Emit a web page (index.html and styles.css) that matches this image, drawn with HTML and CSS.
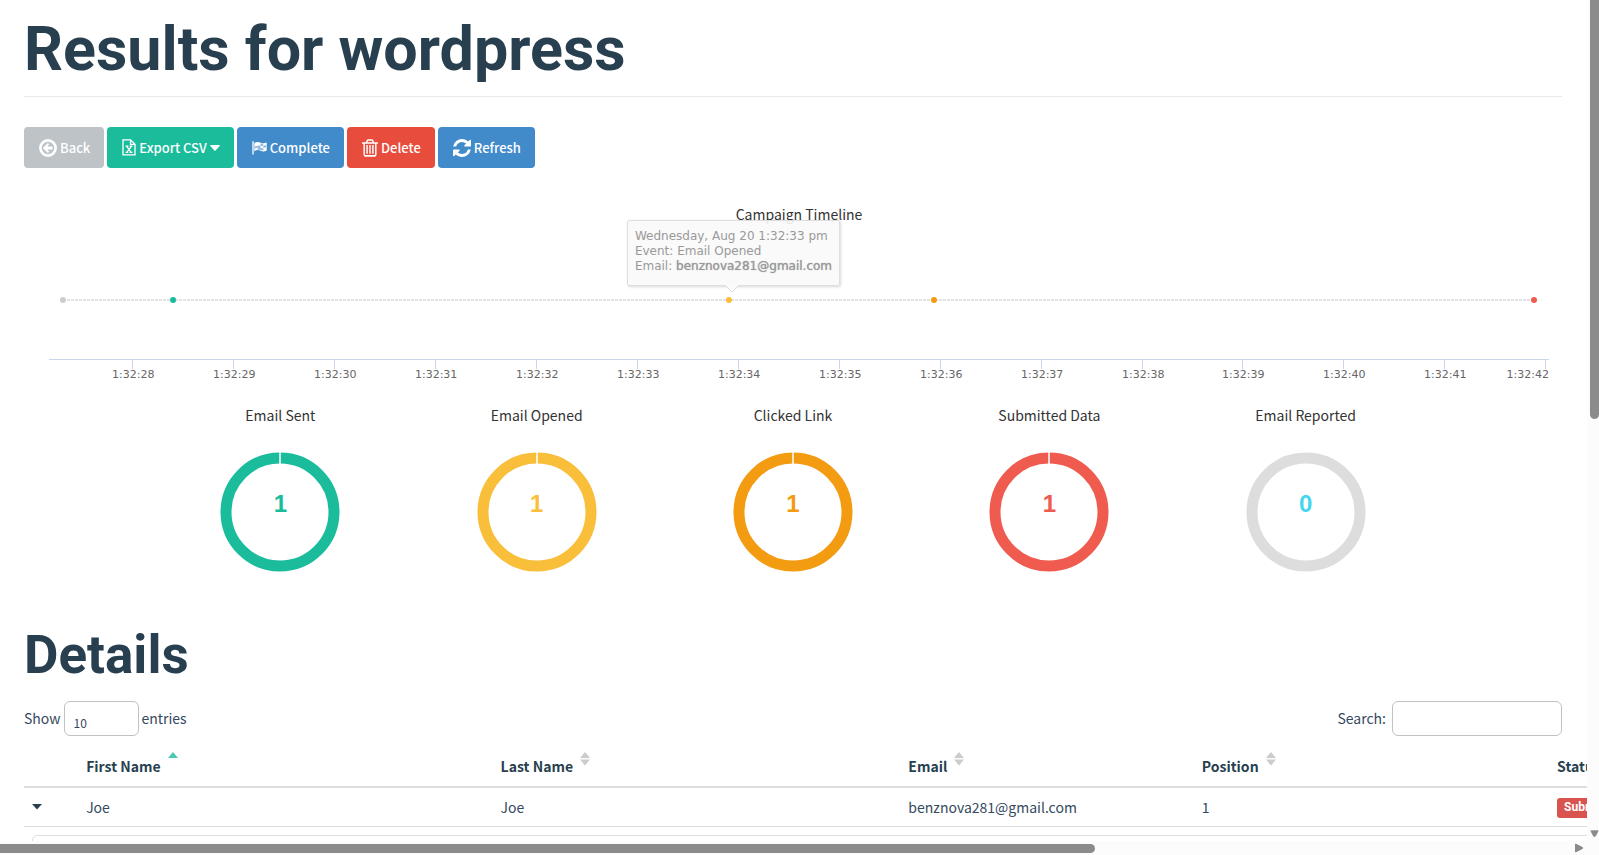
FILE: index.html
```html
<!DOCTYPE html>
<html lang="en">
<head>
<meta charset="utf-8">
<title>Results for wordpress</title>
<link rel="stylesheet" href="styles.css">
</head>
<body>
<div class="window">
<main class="page">
  <h1 class="page-title">Results for wordpress</h1>

  <div class="toolbar">
    <button class="btn btn-muted" type="button"><svg class="icon icon-18" viewBox="0 0 18 18" aria-hidden="true"><circle cx="9" cy="9" r="7.6" fill="none" stroke="currentColor" stroke-width="2.7"/><path d="M8.900 3.900 10.200 5.200 8.300 7.500H13.500V10.500H8.300L10.200 12.800 8.900 14.100 3.800 9Z" fill="currentColor"/></svg>Back</button>
    <button class="btn btn-green" type="button"><svg class="icon icon-file" viewBox="0 0 14 17" aria-hidden="true"><path d="M1 .9H8.6L13 5.3V15.9H1ZM8.5 1V5.4H13" fill="none" stroke="currentColor" stroke-width="1.3"/><path d="M3.6 7.2H6.4M7.7 7.2H10.4M3.6 13.4H6.3M7.6 13.4H10.4M4.7 7.3 9.2 13.3M9.4 7.3 4.7 13.3" fill="none" stroke="currentColor" stroke-width="1.3"/></svg>Export CSV<svg class="caret" viewBox="0 0 10 6" aria-hidden="true"><path d="M.6 0H9.4Q10.3.2 9.6 1L5.6 5.5Q5 6 4.4 5.5L.4 1Q-.3.2.6 0Z" fill="currentColor"/></svg></button>
    <button class="btn btn-blue" type="button"><svg class="icon icon-flag" viewBox="0 0 15 14" aria-hidden="true"><path d="M1 .3V13.6" stroke="currentColor" stroke-width="1.3"/><path d="M2.3 2.1Q5.3.2 8.1 1.6T14.7 1.5V9.4Q11.4 11.3 8.6 9.7T2.3 10.2Z" fill="currentColor"/><path d="M5.4 2.2V4.7L2.8 5.5V7.6L5.4 6.6ZM5.5 6.7 8.4 7V9L5.5 8.6ZM8.5 2.6 11.2 2.8V5L8.5 4.7ZM8.5 4.8V7L5.5 6.5V4.5ZM11.3 5 14 4V6.3L11.3 7.1ZM11.3 7.2V9.4L8.5 9V7.1Z" fill="#428bca" fill-opacity=".6"/></svg>Complete</button>
    <button class="btn btn-red" type="button"><svg class="icon icon-trash" viewBox="192 128 1408 1536" aria-hidden="true"><path fill="currentColor" fill-rule="evenodd" d="M672 384h448l-48-117q-7-9-17-11h-317q-10 2-17 11zM448 512v948q0 44 28 60h840q28-16 28-60v-948zM1600 416v64q0 14-9 23t-23 9h-96v948q0 83-47 143.500t-113 60.500h-832q-66 0-113-58.500t-47-141.500v-952h-96q-14 0-23-9t-9-23v-64q0-14 9-23t23-9h309l70-167q15-37 54-63t79-26h320q40 0 79 26t54 63l70 167h309q14 0 23 9t9 23z"/><path fill="currentColor" d="M576 640h128v768h-128zM832 640h128v768h-128zM1088 640h128v768h-128z"/></svg>Delete</button>
    <button class="btn btn-blue" type="button"><svg class="icon icon-18" viewBox="128 128 1536 1536" aria-hidden="true"><path fill="currentColor" d="M1639 1056q0 5-1 7-64 268-268 434.500t-478 166.500q-146 0-282.500-55t-243.500-157l-129 129q-19 19-45 19t-45-19-19-45v-448q0-26 19-45t45-19h448q26 0 45 19t19 45-19 45l-137 137q71 66 161 102t187 36q134 0 250-65t186-179q11-17 53-117 8-23 30-23h192q13 0 22.500 9.500t9.500 22.500zm25-800v448q0 26-19 45t-45 19h-448q-26 0-45-19t-19-45 19-45l138-138q-148-137-349-137-134 0-250 65t-186 179q-11 17-53 117-8 23-30 23h-199q-13 0-22.500-9.500t-9.500-22.500v-7q65-268 270-434.500t480-166.500q146 0 284 55.500t245 156.500l130-129q19-19 45-19t45 19 19 45z"/></svg>Refresh</button>
  </div>

  <section class="timeline">
    <h2 class="chart-title">Campaign Timeline</h2>
    <svg class="timeline-plot" role="img" aria-label="Campaign events over time">
      <line class="series" x1="0.93%" x2="99%" y1="75" y2="75"/>
      <circle cx="0.93%" cy="75" r="3" fill="#ccc"/>
      <circle cx="8.27%" cy="75" r="3" fill="#1abc9c"/>
      <circle cx="45.330%" cy="75" r="3" fill="#f9bf3b"/>
      <circle cx="59%" cy="75" r="3" fill="#f39c12"/>
      <circle cx="99%" cy="75" r="3" fill="#f05b4f"/>
      <line class="axis" x1="0" x2="100%" y1="134.500" y2="134.500"/>
      <g class="axis">
        <line x1="5.567%" x2="5.567%" y1="134" y2="144"/><line x1="12.300%" x2="12.300%" y1="134" y2="144"/><line x1="19.033%" x2="19.033%" y1="134" y2="144"/><line x1="25.767%" x2="25.767%" y1="134" y2="144"/><line x1="32.500%" x2="32.500%" y1="134" y2="144"/><line x1="39.233%" x2="39.233%" y1="134" y2="144"/><line x1="45.967%" x2="45.967%" y1="134" y2="144"/><line x1="52.700%" x2="52.700%" y1="134" y2="144"/><line x1="59.433%" x2="59.433%" y1="134" y2="144"/><line x1="66.167%" x2="66.167%" y1="134" y2="144"/><line x1="72.900%" x2="72.900%" y1="134" y2="144"/><line x1="79.567%" x2="79.567%" y1="134" y2="144"/><line x1="86.300%" x2="86.300%" y1="134" y2="144"/><line x1="93.033%" x2="93.033%" y1="134" y2="144"/><line x1="99.767%" x2="99.767%" y1="134" y2="144"/>
      </g>
      <g class="ticks">
        <text x="5.620%" y="153">1:32:28</text><text x="12.350%" y="153">1:32:29</text><text x="19.080%" y="153">1:32:30</text><text x="25.810%" y="153">1:32:31</text><text x="32.550%" y="153">1:32:32</text><text x="39.280%" y="153">1:32:33</text><text x="46.010%" y="153">1:32:34</text><text x="52.750%" y="153">1:32:35</text><text x="59.480%" y="153">1:32:36</text><text x="66.210%" y="153">1:32:37</text><text x="72.950%" y="153">1:32:38</text><text x="79.620%" y="153">1:32:39</text><text x="86.350%" y="153">1:32:40</text><text x="93.080%" y="153">1:32:41</text><text class="tick-last" x="100%" y="153">1:32:42</text>
      </g>
    </svg>
    <div class="tooltip">
      <div>Wednesday, Aug 20 1:32:33 pm</div>
      <div>Event: Email Opened</div>
      <div>Email: <b class="tooltip-value">benznova281@gmail.com</b></div>
      <svg class="tooltip-tip" viewBox="0 0 14 8" aria-hidden="true"><path d="M0 0 7 7 14 0" fill="#fbfbfb" stroke="#dedede"/></svg>
    </div>
  </section>

  <section class="stats">
    <div class="stat stat-sent"><h3 class="chart-title">Email Sent</h3><div class="donut"><svg class="ring" viewBox="0 0 120 120" aria-hidden="true"><circle cx="60" cy="60" r="54" fill="none" stroke="currentColor" stroke-width="11"/><path d="M60 0V12" stroke="#fff" stroke-width="1.500"/></svg><span class="count">1</span></div></div>
    <div class="stat stat-opened"><h3 class="chart-title">Email Opened</h3><div class="donut"><svg class="ring" viewBox="0 0 120 120" aria-hidden="true"><circle cx="60" cy="60" r="54" fill="none" stroke="currentColor" stroke-width="11"/><path d="M60 0V12" stroke="#fff" stroke-width="1.500"/></svg><span class="count">1</span></div></div>
    <div class="stat stat-clicked"><h3 class="chart-title">Clicked Link</h3><div class="donut"><svg class="ring" viewBox="0 0 120 120" aria-hidden="true"><circle cx="60" cy="60" r="54" fill="none" stroke="currentColor" stroke-width="11"/><path d="M60 0V12" stroke="#fff" stroke-width="1.500"/></svg><span class="count">1</span></div></div>
    <div class="stat stat-data"><h3 class="chart-title">Submitted Data</h3><div class="donut"><svg class="ring" viewBox="0 0 120 120" aria-hidden="true"><circle cx="60" cy="60" r="54" fill="none" stroke="currentColor" stroke-width="11"/><path d="M60 0V12" stroke="#fff" stroke-width="1.500"/></svg><span class="count">1</span></div></div>
    <div class="stat stat-reported"><h3 class="chart-title">Email Reported</h3><div class="donut"><svg class="ring" viewBox="0 0 120 120" aria-hidden="true"><circle cx="60" cy="60" r="54" fill="none" stroke="#ddd" stroke-width="11"/></svg><span class="count">0</span></div></div>
  </section>

  <h2 class="section-title">Details</h2>
  <div class="controls">
    <label class="control">Show <select class="field length"><option>10</option><option>25</option><option>50</option></select> entries</label>
    <label class="control control-search">Search: <input class="field search" type="search"></label>
  </div>

  <table class="results">
    <colgroup><col class="c-toggle"><col class="c-first"><col class="c-last"><col class="c-email"><col class="c-pos"><col></colgroup>
    <thead>
      <tr><th></th>
        <th>First Name<svg class="sort sort-on" viewBox="0 0 10 14" aria-hidden="true"><path d="M0 6 5 0 10 6Z" fill="currentColor"/></svg></th>
        <th>Last Name<svg class="sort" viewBox="0 0 10 14" aria-hidden="true"><path d="M0 6 5 0 10 6ZM0 7.500H10L5 13.500Z" fill="currentColor"/></svg></th>
        <th>Email<svg class="sort" viewBox="0 0 10 14" aria-hidden="true"><path d="M0 6 5 0 10 6ZM0 7.500H10L5 13.500Z" fill="currentColor"/></svg></th>
        <th>Position<svg class="sort" viewBox="0 0 10 14" aria-hidden="true"><path d="M0 6 5 0 10 6ZM0 7.500H10L5 13.500Z" fill="currentColor"/></svg></th>
        <th>Status</th></tr>
    </thead>
    <tbody>
      <tr><td><button class="toggle" type="button" aria-label="Toggle details"><svg class="caret-row" viewBox="0 0 10 6" aria-hidden="true"><path d="M0 0H10L5 5.500Z" fill="currentColor"/></svg></button></td>
        <td>Joe</td><td>Joe</td><td>benznova281@gmail.com</td><td>1</td><td><span class="label">Submitted Data</span></td></tr>
      <tr class="detail-row"><td colspan="6"><div class="detail"></div></td></tr>
    </tbody>
  </table>
</main>
<div class="vbar"><div class="vthumb"></div><svg class="vend" viewBox="0 0 10 7" aria-hidden="true"><path d="M1 .5H9L6 6.500H4Z" fill="#8b8b8b" stroke="#8b8b8b" stroke-linejoin="round"/></svg></div>
<div class="hbar"><div class="hthumb"></div><svg class="hend" viewBox="0 0 8 10" aria-hidden="true"><path d="M.5 1V9L7.500 5.500V4.500Z" fill="#8b8b8b" stroke="#8b8b8b" stroke-linejoin="round"/></svg></div>
</div>
</body>
</html>
```
FILE: styles.css
```css
* { box-sizing: border-box; }
body {
  margin: 0;
  background: #fff;
  color: #34495e;
  font: 14px/21px "Noto Sans CJK SC", sans-serif;
}
.window {
  height: 100vh;
  display: grid;
  grid-template: minmax(0, 1fr) 14px / minmax(0, 1fr) 12px;
}
.page { overflow: hidden; padding: 0 25px 0 24px; }
.page-title, .section-title {
  margin: 0;
  color: #283f50;
  font-family: Roboto, sans-serif;
  font-weight: 700;
}
.page-title {
  font-size: 61px;
  line-height: 67px;
  padding: 16px 0 13px;
  border-bottom: 1px solid #e7e9ec;
}
.section-title { font-size: 53px; line-height: 58px; margin-top: 54px; }

.toolbar { display: flex; gap: 3px; margin-top: 30px; }
.btn {
  display: flex;
  align-items: center;
  gap: 3px;
  height: 41px;
  padding: 0 14px 0 15px;
  border: 0;
  border-radius: 4px;
  color: #fff;
  font: 500 13px/20px "Noto Sans CJK SC", sans-serif;
}
.btn-muted { background: #bdc3c7; }
.btn-green { background: #1abc9c; }
.btn-blue { background: #428bca; }
.btn-red { background: #e74c3c; }
.icon { flex: none; }
.icon-18 { width: 18px; height: 18px; }
.icon-file { width: 14px; height: 17px; }
.icon-flag { width: 15px; height: 14px; }
.icon-trash { width: 16px; height: 18px; }
.caret { width: 10px; height: 6px; }

.timeline { position: relative; margin-top: 35px; padding: 0 13px 0 25px; }
.chart-title {
  margin: 0;
  color: #333;
  font-size: 14px;
  line-height: 22px;
  font-weight: 400;
  text-align: center;
}
.timeline-plot { display: block; width: 100%; height: 179px; overflow: visible; }
.series { stroke: #e2e2e2; stroke-width: 2; stroke-dasharray: 3 1; }
.axis { stroke: #ccd6eb; stroke-width: 1; }
.ticks { fill: #666; font: 11px "DejaVu Sans", sans-serif; text-anchor: middle; }
.ticks .tick-last { text-anchor: end; }
.tooltip {
  position: absolute;
  top: 17px;
  left: 39.200%;
  padding: 8px 7px 11px;
  border: 1px solid #dedede;
  border-radius: 2px;
  background: rgba(250, 250, 250, .9);
  box-shadow: 1px 1px 3px rgba(0, 0, 0, .15);
  color: #999;
  font: 12px/15px "DejaVu Sans", sans-serif;
  white-space: nowrap;
}
.tooltip-value { font-weight: 400; text-shadow: 0 0 1px currentColor; }
.tooltip-tip { position: absolute; top: 100%; left: 50%; width: 14px; height: 8px; margin-left: -8px; }

.stats { display: grid; grid-template-columns: repeat(5, 1fr); padding: 0 8.333%; }
.donut { display: grid; place-items: center; margin-top: 26px; }
.ring, .count { grid-area: 1 / 1; }
.ring { width: 120px; height: 120px; }
.count { padding-bottom: 16px; font: 700 24px/24px "Liberation Sans", sans-serif; }
.stat-sent { color: #1abc9c; }
.stat-opened { color: #f9bf3b; }
.stat-clicked { color: #f39c12; }
.stat-data { color: #f05b4f; }
.stat-reported { color: #45d6ef; }

.controls { display: flex; justify-content: space-between; margin-top: 17px; font-size: 14px; }
.control { display: flex; align-items: center; gap: 3px; }
.control-search { gap: 6px; }
.field {
  height: 35px;
  border: 1px solid #bdc3c7;
  border-radius: 6px;
  background: #fff;
  color: #34495e;
  font: 12px/16px "Noto Sans CJK SC", sans-serif;
  appearance: none;
}
.length { width: 75px; padding: 8px 9px 0; }
.search { width: 170px; padding: 0 10px; }

.results { width: 110%; margin-top: 10px; border-collapse: collapse; table-layout: fixed; }
.c-toggle { width: 3.200%; }
.c-first { width: 24.500%; }
.c-last { width: 24.100%; }
.c-email { width: 17.350%; }
.c-pos { width: 21%; }
.results th { padding: 10px 8px 9px; border-bottom: 2px solid #ddd; color: #283f50; text-align: left; font-weight: 700; }
.results td { padding: 8px; border-bottom: 1px solid #ddd; }
.sort { width: 10px; height: 14px; margin: -6px 0 0 7px; vertical-align: 6px; color: #ccc; }
.sort-on { color: #48c9b0; }
.toggle { display: block; padding: 0; border: 0; background: none; color: #283f50; }
.caret-row { display: block; width: 10px; height: 6px; }
.label {
  display: inline-block;
  margin-top: 2px;
  padding: 2px 7px 4px;
  border-radius: 3px;
  background: #d9534f;
  color: #fff;
  font: 700 12px/14px Roboto, sans-serif;
  vertical-align: top;
}
.detail { height: 40px; border: 1px solid #ddd; border-radius: 5px; }

.vbar, .hbar { background: #fcfcfc; display: flex; justify-content: space-between; align-items: center; }
.vbar { grid-area: 1 / 2; flex-direction: column; padding: 0 0 4px 3px; }
.vthumb { width: 100%; height: 50%; border-radius: 0 0 5px 5px; background: #8b8b8b; }
.vend { width: 9px; height: 7px; }
.hbar { grid-area: 2 / 1 / 3 / 3; padding-right: 16px; }
.hthumb { width: 69.200%; height: 9px; border-radius: 0 5px 5px 0; background: #8b8b8b; }
.hend { width: 8px; height: 10px; }
```
